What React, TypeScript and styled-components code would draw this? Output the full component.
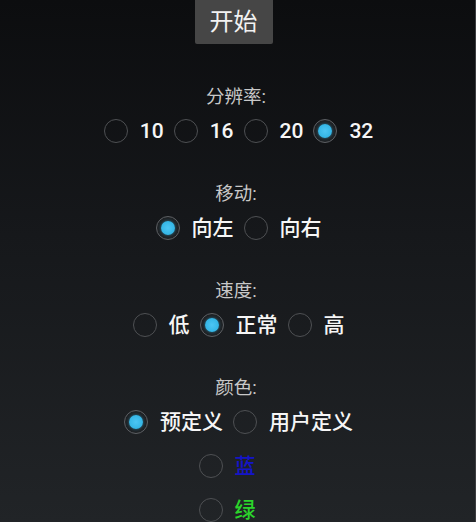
import React, {useState} from "react";
import styled, {createGlobalStyle} from "styled-components";

const GlobalStyle = createGlobalStyle`
    html, body {
        margin: 0;
        padding: 0;
        height: 100%;
    }

    body {
        background: #0c0d0f;
        font-family: Roboto, "Noto Sans CJK SC", sans-serif;
        overflow: hidden;
    }
`;

const Screen = styled.div`
    width: 476px;
    height: 522px;
    box-sizing: border-box;
    border-right: 1px solid #3c3d40;
    background: linear-gradient(to bottom, #0c0d0f 0%, #16181b 45%, #212427 100%);
    display: flex;
    flex-direction: column;
    align-items: center;
    overflow: hidden;
`;

const StartButton = styled.button`
    width: 78px;
    height: 47px;
    margin: 0 8px 12px 0;
    padding: 0;
    border: none;
    border-radius: 0 0 2px 2px;
    background: #464646;
    color: #f2f2f2;
    font-family: Roboto, "Noto Sans CJK SC", sans-serif;
    font-size: 24px;
    line-height: 44px;
`;

const Section = styled.section`
    display: flex;
    flex-direction: column;
    align-items: center;
    padding-top: 29px;
`;

const SectionTitle = styled.div`
    height: 24px;
    line-height: 24px;
    font-size: 18.5px;
    color: #c8c8c8;
    padding-right: 3px;
`;

const RadioRow = styled.div<{ vertical?: boolean }>`
    display: flex;
    flex-direction: ${({vertical}) => vertical ? "column" : "row"};
    align-items: ${({vertical}) => vertical ? "flex-start" : "center"};
    gap: ${({vertical}) => vertical ? "0" : "10px"};
    padding-left: ${({vertical}) => vertical ? "0" : "2px"};
    padding-right: ${({vertical}) => vertical ? "21px" : "0"};
`;

const RadioItem = styled.label`
    display: flex;
    align-items: center;
    height: 44px;
    cursor: pointer;
`;

const RadioCircle = styled.span<{ checked: boolean }>`
    position: relative;
    width: 24px;
    height: 24px;
    box-sizing: border-box;
    border-radius: 50%;
    border: 1.5px solid ${({checked}) => checked ? "#5c5f63" : "#4e5053"};
    background: ${({checked}) => checked ? "#1f2225" : "transparent"};
    margin-right: 12px;
    flex-shrink: 0;

    &::after {
        content: "";
        display: ${({checked}) => checked ? "block" : "none"};
        position: absolute;
        left: 50%;
        top: 50%;
        width: 14px;
        height: 14px;
        margin: -7px 0 0 -7px;
        border-radius: 50%;
        background: radial-gradient(circle, #4cc6f4 0%, #33b5e5 70%, #2a9bc6 100%);
        box-shadow: 0 0 3px rgba(51, 181, 229, 0.6);
    }
`;

const RadioText = styled.span<{ color?: string }>`
    font-size: 21px;
    font-weight: 500;
    line-height: 24px;
    color: ${({color}) => color || "#f6f6f6"};
`;

type Option = {
    value: string;
    label: string;
    color?: string;
};

type RadioGroupProps = {
    options: Option[];
    value: string;
    onChange: (v: string) => void;
    vertical?: boolean;
}

const RadioGroup: React.FC<RadioGroupProps> = ({options, value, onChange, vertical}) => {
    return <RadioRow vertical={vertical}>
        {options.map(o => (
            <RadioItem key={o.value} onClick={() => onChange(o.value)}>
                <RadioCircle checked={value === o.value}/>
                <RadioText color={o.color}>{o.label}</RadioText>
            </RadioItem>
        ))}
    </RadioRow>;
};

const resolutions: Option[] = [
    {value: "10", label: "10"},
    {value: "16", label: "16"},
    {value: "20", label: "20"},
    {value: "32", label: "32"},
];

const moves: Option[] = [
    {value: "left", label: "向左"},
    {value: "right", label: "向右"},
];

const speeds: Option[] = [
    {value: "low", label: "低"},
    {value: "normal", label: "正常"},
    {value: "high", label: "高"},
];

const colorModes: Option[] = [
    {value: "preset", label: "预定义"},
    {value: "custom", label: "用户定义"},
];

const colors: Option[] = [
    {value: "blue", label: "蓝", color: "#1414c8"},
    {value: "green", label: "绿", color: "#2bd42b"},
];

export default function App() {
    const [resolution, setResolution] = useState("32");
    const [move, setMove] = useState("left");
    const [speed, setSpeed] = useState("normal");
    const [colorMode, setColorMode] = useState("preset");
    const [color, setColor] = useState("");

    return <>
        <GlobalStyle/>
        <Screen>
            <StartButton>开始</StartButton>
            <Section>
                <SectionTitle>分辨率:</SectionTitle>
                <RadioGroup options={resolutions} value={resolution} onChange={setResolution}/>
            </Section>
            <Section>
                <SectionTitle>移动:</SectionTitle>
                <RadioGroup options={moves} value={move} onChange={setMove}/>
            </Section>
            <Section>
                <SectionTitle>速度:</SectionTitle>
                <RadioGroup options={speeds} value={speed} onChange={setSpeed}/>
            </Section>
            <Section>
                <SectionTitle>颜色:</SectionTitle>
                <RadioGroup options={colorModes} value={colorMode} onChange={setColorMode}/>
                <RadioGroup vertical options={colors} value={color} onChange={setColor}/>
            </Section>
        </Screen>
    </>;
}
